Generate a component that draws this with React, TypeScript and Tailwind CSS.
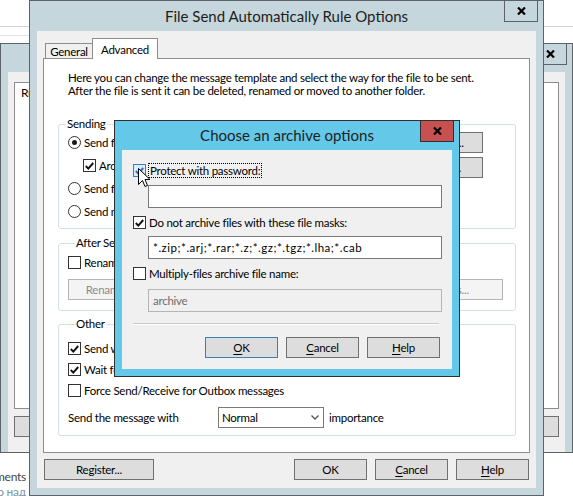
import { ReactNode } from 'react';

const FONT = "font-['Segoe_UI',Lato,sans-serif] text-[11.5px] tracking-[-0.25px]";

const CloseX = () => (
    <svg width="9" height="8" viewBox="0 0 9 8">
        <path d="M1 0.5 L8 7.5 M8 0.5 L1 7.5" stroke="#000" strokeWidth="2.2" fill="none" />
    </svg>
);

const CloseBtn = ({ red }: { red?: boolean }) => (
    <div
        className={`-mt-px flex h-[22px] w-[34px] items-center justify-center border ${
            red ? 'border-[#2f2f2f] bg-[#c75050]' : 'border-[#5c6368] bg-[#c5d6dc]'
        }`}
    >
        <CloseX />
    </div>
);

const Check = ({ checked, hover }: { checked?: boolean; hover?: boolean }) => (
    <span
        className={`flex h-[13px] w-[13px] shrink-0 items-center justify-center border ${
            hover ? 'border-[#3c7fb1] bg-[#dcecfc]' : 'border-[#333333] bg-white'
        }`}
    >
        {checked && (
            <svg width="9" height="8" viewBox="0 0 9 8">
                <path
                    d="M0.8 4 L3.3 6.6 L8.2 1"
                    stroke={hover ? '#2b6cc4' : '#111'}
                    strokeWidth="1.9"
                    fill="none"
                />
            </svg>
        )}
    </span>
);

const Radio = ({ checked }: { checked?: boolean }) => (
    <span className="flex h-[13px] w-[13px] shrink-0 items-center justify-center rounded-full border border-[#333333] bg-white">
        {checked && <span className="h-[5px] w-[5px] rounded-full bg-[#1a1a1a]" />}
    </span>
);

type BtnProps = { children: ReactNode; className?: string; def?: boolean; disabled?: boolean };

const Btn = ({ children, className = '', def, disabled }: BtnProps) => (
    <div
        className={`flex h-[21px] shrink-0 items-center justify-center border ${
            disabled
                ? 'border-[#b5b5b5] bg-[#f4f4f4] text-[#8a8a8a]'
                : def
                  ? 'border-[#3c7fb1] bg-[#dddddd] text-black'
                  : 'border-[#707070] bg-[#dddddd] text-black'
        } ${className}`}
    >
        {children}
    </div>
);

const Group = ({ title, children, className = '' }: { title: string; children: ReactNode; className?: string }) => (
    <fieldset className={`rounded-[3px] border border-[#d5dfe5] ${className}`}>
        <legend className="ml-[7px] px-[1px] leading-[14px]">{title}</legend>
        {children}
    </fieldset>
);

const Cursor = () => (
    <svg className="absolute left-[138px] top-[168px]" width="13" height="21" viewBox="0 0 13 21">
        <path
            d="M0.5 0.5 L0.5 16.5 L4.5 12.5 L7 18.5 L9.5 17.5 L7 11.5 L12 11.5 Z"
            fill="#fff"
            stroke="#000"
            strokeWidth="1"
            strokeLinejoin="miter"
        />
    </svg>
);

const BackWindow = () => (
    <div className="absolute left-0 top-[43px] flex h-[410px] w-[573px] flex-col border border-[#5c6368] bg-[#c5d6dc]">
        <div className="flex h-[28px] justify-end pr-[5px]">
            <CloseBtn />
        </div>
        <div className="mx-[7px] flex flex-1 flex-col bg-[#f0f0f0] px-[6px] pb-[8px] pt-[10px]">
            <div className="h-[327px] border border-[#8d8d8d] bg-white pl-[6px] pt-[1px] text-[12px]">Rules</div>
            <div className="mt-[7px] flex justify-between">
                <Btn className="w-[80px]">Add</Btn>
                <Btn className="w-[80px]">Close</Btn>
            </div>
        </div>
    </div>
);

const MainWindow = () => (
    <div className="absolute left-[29px] top-0 flex h-[496px] w-[515px] flex-col border border-[#5c6368] bg-[#c5d6dc]">
        <div className="grid h-[30px] grid-cols-[1fr_auto_1fr]">
            <div />
            <div className="pt-[5px] text-[15px] leading-[20px] tracking-normal text-[#1e1e1e]">
                File Send Automatically Rule Options
            </div>
            <div className="flex justify-end pr-[5px]">
                <CloseBtn />
            </div>
        </div>
        <div className="mx-[7px] mb-[7px] flex flex-1 flex-col bg-[#f0f0f0] px-[6px] pb-[8px]">
            <div className="flex h-[27px] items-end pl-[2px]">
                <div className="flex h-[15px] w-[48px] items-center justify-center border-l border-r border-t border-[#8d8d8d] bg-[#f0f0f0] pt-[1px]">
                    General
                </div>
                <div className="relative z-10 -mb-px -ml-px flex h-[21px] w-[66px] items-start justify-center border-l border-r border-t border-[#8d8d8d] bg-white pt-[2px]">
                    Advanced
                </div>
            </div>
            <div className="flex h-[395px] flex-col border border-[#8d8d8d] bg-white px-[14px] leading-[13px] text-black">
                <div className="pl-[10px] pt-[12px]">
                    <div>Here you can change the message template and select the way for the file to be sent.</div>
                    <div>After the file is sent it can be deleted, renamed or moved to another folder.</div>
                </div>
                <Group title="Sending" className="mr-[-1px] mt-[20px] pb-[5px]">
                    <div className="flex h-[23px] items-center justify-between pl-[9px] pr-[32px]">
                        <div className="flex items-center gap-[3px]">
                            <Radio checked />
                            <span>Send file as attachment</span>
                        </div>
                        <Btn className="w-[90px]">Template...</Btn>
                    </div>
                    <div className="flex h-[23px] items-center justify-between pl-[24px] pr-[32px]">
                        <div className="flex items-center gap-[3px]">
                            <Check checked />
                            <span>Archive file before sending</span>
                        </div>
                        <Btn className="mt-[4px] w-[90px]">Options...</Btn>
                    </div>
                    <div className="flex h-[23px] items-center gap-[3px] pl-[9px]">
                        <Radio />
                        <span>Send file as link</span>
                    </div>
                    <div className="flex h-[23px] items-center gap-[3px] pl-[9px]">
                        <Radio />
                        <span>Send no file</span>
                    </div>
                </Group>
                <Group title="After Send" className="mr-[-1px] mt-[7px] pb-[10px] pl-[9px] pr-[12px]">
                    <div className="flex items-center gap-[3px] pt-[6px]">
                        <Check />
                        <span>Rename or move the sent file</span>
                    </div>
                    <div className="mt-[10px] flex justify-between">
                        <Btn disabled className="w-[82px]">Rename...</Btn>
                        <Btn disabled className="w-[114px]">Settings...</Btn>
                    </div>
                </Group>
                <Group title="Other" className="mr-[-1px] mt-[6px] pb-[7px] pl-[9px]">
                    <div className="pt-[7px]">
                        <div className="flex h-[21px] items-center gap-[3px]">
                            <Check checked />
                            <span>Send when Outlook starts</span>
                        </div>
                        <div className="flex h-[21px] items-center gap-[3px]">
                            <Check checked />
                            <span>Wait for the file to be closed</span>
                        </div>
                        <div className="flex h-[21px] items-center gap-[3px]">
                            <Check />
                            <span>Force Send/Receive for Outbox messages</span>
                        </div>
                        <div className="mt-[5px] flex h-[22px] items-center">
                            <span className="w-[150px]">Send the message with</span>
                            <div className="flex h-[21px] w-[106px] items-center justify-between border border-[#7a7a7a] bg-white pl-[3px] pr-[4px]">
                                <span>Normal</span>
                                <svg width="8" height="5" viewBox="0 0 8 5">
                                    <path d="M0.5 0.5 L4 4 L7.5 0.5" stroke="#555" strokeWidth="1.4" fill="none" />
                                </svg>
                            </div>
                            <span className="ml-[5px]">importance</span>
                        </div>
                    </div>
                </Group>
            </div>
            <div className="mt-[6px] flex justify-between px-[1px]">
                <Btn className="w-[110px]">Register...</Btn>
                <div className="flex gap-[8px]">
                    <Btn className="w-[73px]">OK</Btn>
                    <Btn className="w-[73px]">
                        <span className="underline underline-offset-2">C</span>ancel
                    </Btn>
                    <Btn className="w-[73px]">
                        <span className="underline underline-offset-2">H</span>elp
                    </Btn>
                </div>
            </div>
        </div>
    </div>
);

const ArchiveDialog = () => (
    <div className="absolute left-[114px] top-[120px] flex h-[257px] w-[346px] flex-col border border-[#2f2f2f] bg-[#64c8e9]">
        <div className="grid h-[29px] grid-cols-[1fr_auto_1fr]">
            <div />
            <div className="pt-[4px] text-[15px] leading-[20px] tracking-normal text-[#1e1e1e]">
                Choose an archive options
            </div>
            <div className="flex justify-end pr-[5px]">
                <CloseBtn red />
            </div>
        </div>
        <div className="mx-[7px] mb-[7px] flex flex-1 flex-col bg-[#f0f0f0] pl-[11px] pr-[12px] pt-[13px] text-black">
            <div className="flex h-[15px] items-center">
                <Check checked hover />
                <span className="ml-[2px] border border-dotted border-black px-[1px] leading-[13px]">
                    Protect with password:
                </span>
            </div>
            <div className="ml-[15px] mt-[7px] h-[23px] w-[294px] border border-[#7a7a7a] bg-white" />
            <div className="mt-[7px] flex h-[15px] items-center gap-[3px]">
                <Check checked />
                <span>Do not archive files with these file masks:</span>
            </div>
            <div className="ml-[15px] mt-[6px] flex h-[23px] w-[294px] items-center border border-[#7a7a7a] bg-white pl-[4px] tracking-[0.5px]">
                *.zip;*.arj;*.rar;*.z;*.gz;*.tgz;*.lha;*.cab
            </div>
            <div className="mt-[7px] flex h-[15px] items-center gap-[3px]">
                <Check />
                <span>Multiply-files archive file name:</span>
            </div>
            <div className="ml-[15px] mt-[8px] flex h-[23px] w-[294px] items-center border border-[#b5b5b5] bg-[#f0f0f0] pl-[4px] text-[#6d6d6d]">
                archive
            </div>
            <div className="mt-[11px] h-[2px] w-[306px] border-b border-t border-b-white border-t-[#c8c8c8]" />
            <div className="mt-[12px] flex justify-end gap-[8px]">
                <Btn def className="w-[73px]">
                    <span className="underline underline-offset-2">O</span>K
                </Btn>
                <Btn className="w-[73px]">
                    <span className="underline underline-offset-2">C</span>ancel
                </Btn>
                <Btn className="w-[73px]">
                    <span className="underline underline-offset-2">H</span>elp
                </Btn>
            </div>
        </div>
    </div>
);

export default function App() {
    return (
        <div className={`relative h-[496px] w-[573px] overflow-hidden bg-white ${FONT}`}>
            <div className="flex flex-col">
                <div className="h-[26px]" />
                <div className="h-px w-full bg-[#d4d4d4]" />
                <div className="h-[8px]" />
                <div className="h-px w-[40px] bg-[#e3e3e3]" />
                <div className="h-[434px]" />
                <div className="flex w-[26px] justify-end overflow-hidden whitespace-nowrap text-[12px] leading-[14px] text-[#444]">
                    Attachments
                </div>
                <div className="flex w-[26px] justify-end overflow-hidden whitespace-nowrap pt-[1px] text-[12px] leading-[13px] text-[#7d96a6]">
                    Ничего над
                </div>
            </div>
            <BackWindow />
            <MainWindow />
            <ArchiveDialog />
            <Cursor />
        </div>
    );
}
